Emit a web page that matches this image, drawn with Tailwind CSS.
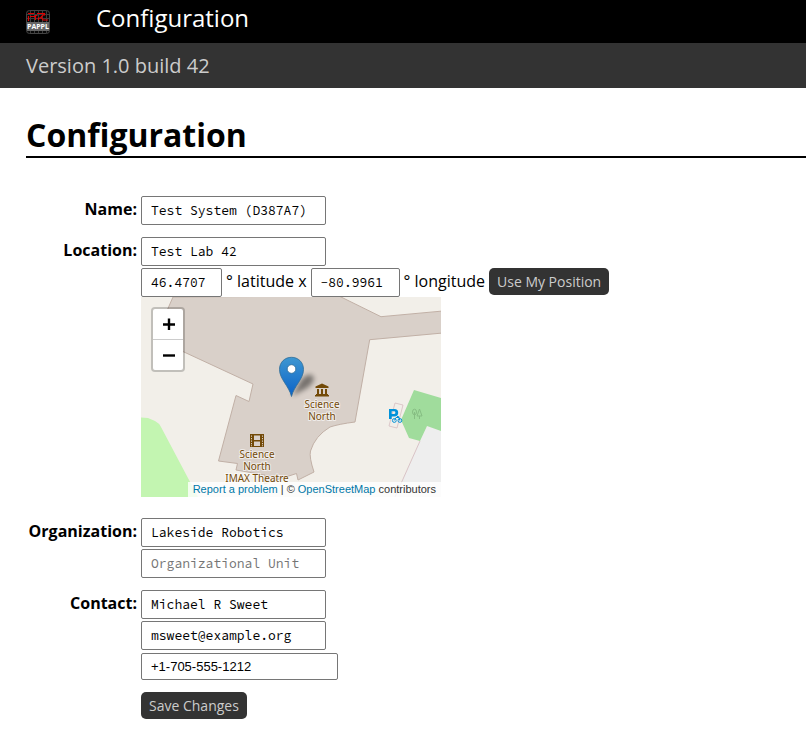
<!DOCTYPE html>
<html lang="en">
<head>
<meta charset="utf-8">
<meta name="viewport" content="width=device-width, initial-scale=1">
<title>Configuration</title>
<script src="https://cdn.jsdelivr.net/npm/@tailwindcss/browser@4"></script>
</head>
<body class="bg-white text-black text-base font-['Open_Sans',sans-serif]">
<header>
  <div class="bg-black text-white h-[43px] pl-[26px] pb-2 flex items-center gap-[46px]">
    <a href="#" aria-label="PAPPL" class="mt-2">
      <svg class="w-6 h-6 block" viewBox="0 0 24 24">
        <rect x=".5" y=".5" width="23" height="23" rx="3" fill="#080808" stroke="#444"/>
        <path d="M4.500 1v11M8.500 1v11M12.500 1v11M16.500 1v11M20.500 1v11M1 4.500h22M1 8.500h22M4.500 21v2M8.500 21v2M12.500 21v2M16.500 21v2M20.500 21v2" stroke="#3c3c3c" fill="none"/>
        <path d="M2.500 11V6M2 3.500H8M4 6.500h5M9.500 10V5.500h2M11 3.500h7.500v2M12.500 10V8h2l3-3.500M15 6.500l2 3.500h5" stroke="#e00000" stroke-width="1.200" fill="none"/>
        <rect x="1" y="12" width="22" height="9" fill="#666"/>
        <text x="12" y="19" text-anchor="middle" font-family="Open Sans" font-weight="700" font-size="7" fill="#fff">PAPPL</text>
      </svg>
    </a>
    <a href="#" class="text-2xl">Configuration</a>
  </div>
  <div class="bg-[#333] text-[#ccc] h-[45px] pl-[26px] flex items-center text-xl">Version 1.0 build 42</div>
</header>
<main class="pl-[26px] pt-[26px]">
  <h1 class="text-[32px] leading-[42px] font-bold border-b-2 border-black">Configuration</h1>
  <form class="mt-[38px] grid grid-cols-[111px_1fr] gap-x-1 gap-y-3">
    <label for="name" class="text-right font-bold leading-[26px]">Name:</label>
    <div class="flex"><input id="name" type="text" value="Test System (D387A7)" class="w-[185px] h-[29px] px-[9px] border border-[#767676] rounded-xs text-[13px] leading-5 font-['Source_Code_Pro','Noto_Sans_Mono','Liberation_Mono',monospace]"></div>

    <label for="location" class="text-right font-bold leading-[26px]">Location:</label>
    <div class="flex flex-col items-start gap-[2px] mb-[9px]">
      <input id="location" type="text" value="Test Lab 42" class="w-[185px] h-[29px] px-[9px] border border-[#767676] rounded-xs text-[13px] leading-5 font-['Source_Code_Pro','Noto_Sans_Mono','Liberation_Mono',monospace]">
      <div>
        <div class="flex items-start gap-1 leading-[26px]">
          <input id="lat" type="text" inputmode="decimal" value="46.4707" class="w-[81px] h-[29px] px-[9px] border border-[#767676] rounded-xs text-[13px] leading-5 font-['Source_Code_Pro','Noto_Sans_Mono','Liberation_Mono',monospace]">
          <label for="lat">° latitude x</label>
          <input id="lon" type="text" inputmode="decimal" value="−80.9961" class="w-[89px] h-[29px] px-[9px] border border-[#767676] rounded-xs text-[13px] leading-5 font-['Source_Code_Pro','Noto_Sans_Mono','Liberation_Mono',monospace]">
          <label for="lon">° longitude</label>
          <button type="button" class="bg-[#333] text-[#ccc] text-sm h-[27px] px-2 rounded-[5px]">Use My Position</button>
        </div>
        <div class="relative w-[300px] h-[200px] overflow-hidden bg-[#f2efe9]">
          <svg class="block w-full h-full" viewBox="0 0 300 200" role="img" aria-label="Map">
            <defs>
              <linearGradient id="pin" x1="0" y1="0" x2="0" y2="1"><stop offset="0" stop-color="#3e97d1"/><stop offset="1" stop-color="#0b62c8"/></linearGradient>
              <filter id="soft" x="-50%" y="-50%" width="200%" height="200%"><feGaussianBlur stdDeviation="2.5"/></filter>
            </defs>
            <path d="M0 120.500L7 121L14 124Q18 126 20 130L57 200H0Z" fill="#c3f5b1"/>
            <path d="M32 0L14 41L43 55L112 87L108 104.500L95 98.500L77.500 164L96.500 166.500L95 173L124 178L123 187L155.500 176.500L157 183L173 175Q168 160 169.500 154Q174 139 189 130Q198 127 214 125L228.700 42.700L302 36V14L240 19.700L198 -1Z" fill="#d9d0c9" stroke="#c1b0a6"/>
            <path d="M286 129L300 134V200H254L279 144Z" fill="#eee"/>
            <path d="M279 144L254 200" stroke="#d9c3c6" fill="none"/>
            <path d="M273 93L300 101V134L286 129L279 144L268 141L260 123Z" fill="#a0dc9c"/>
            <path d="M254 106L262 108L256 131L248 129Z" fill="#f2efe9" stroke="#d5bcc0" stroke-width=".8"/>
            <g stroke="#86bd83" fill="none"><ellipse cx="273.500" cy="115" rx="2" ry="2.800"/><path d="M273.500 115V122M278.500 112l-2.500 7h5zM278.500 119v3"/></g>
            <path fill="#0092da" fill-rule="evenodd" d="M248 112h5.500a3.700 3.700 0 0 1 0 7.400H250.700V122H248zM250.700 114.300v2.800h2.300a1.400 1.400 0 0 0 0-2.800z"/>
            <g stroke="#0092da" fill="none" stroke-width="1"><circle cx="253.300" cy="123.500" r="1.900"/><circle cx="258.900" cy="123.500" r="1.900"/><path d="M253.300 123.500l1.700-3h3M258.900 123.500l-1.300-4H256"/></g>
            <g fill="#734a08">
              <path d="M174.500 91v-1.500l6.500-3l6.500 3V91zM176 92h2v5h-2zM180 92h2v5h-2zM184 92h2v5h-2zM175 97h12v1h1v1.500h-14V98h1z"/>
              <path fill-rule="evenodd" d="M109 137h14v13h-14zM113 138.500v4.500h6v-4.500zM113 144.500v4.500h6v-4.500zM110 138.500v1.200h1v-1.200zM110 141v1.200h1V141zM110 143.500v1.200h1v-1.200zM110 146v1.200h1V146zM110 148.300v1h1v-1zM121 138.500v1.200h1v-1.200zM121 141v1.200h1V141zM121 143.500v1.200h1v-1.200zM121 146v1.200h1V146zM121 148.300v1h1v-1z"/>
            </g>
            <g font-family="Noto Sans" font-size="10" text-anchor="middle" fill="#734a08" stroke="#fff" stroke-opacity=".6" stroke-width="2" paint-order="stroke">
              <text x="181" y="111">Science</text><text x="181" y="123">North</text>
              <text x="116" y="161">Science</text><text x="116" y="173">North</text><text x="116" y="185">IMAX Theatre</text>
            </g>
            <path d="M151 99L160 83Q167 75 172 79Q175 84 166 91Z" fill="#000" opacity=".45" filter="url(#soft)"/>
            <path d="M150.500 99.500C148 89 138.500 82 138.500 72.500C138.500 65 144 60.300 150.500 60.300C157 60.300 162.500 65 162.500 72.500C162.500 82 153 89 150.500 99.500Z" fill="url(#pin)" stroke="#2e6c97" stroke-width=".8"/>
            <circle cx="150.500" cy="72" r="4.300" fill="#fff" stroke="#2e6c97" stroke-width=".8"/>
          </svg>
          <div class="absolute left-[10px] top-[10px] rounded border-2 border-black/20 bg-clip-padding bg-white">
            <button type="button" aria-label="Zoom in" class="flex items-center justify-center w-[30px] h-[31px] border-b border-[#ccc]"><svg class="w-[14px] h-3" viewBox="0 0 14 12"><path d="M2 6.500h12M8 .5v12" stroke="#000" stroke-width="2.400"/></svg></button>
            <button type="button" aria-label="Zoom out" class="flex items-center justify-center w-[30px] h-[30px]"><svg class="w-[14px] h-3" viewBox="0 0 14 12"><path d="M2 6.500h12" stroke="#000" stroke-width="2.400"/></svg></button>
          </div>
          <div class="absolute right-0 bottom-0 bg-white/80 px-[5px] text-[11px] leading-[15px] text-[#333] whitespace-nowrap font-['Liberation_Sans',sans-serif]"><a href="#" class="text-[#0078a8]">Report a problem</a> | © <a href="#" class="text-[#0078a8]">OpenStreetMap</a> contributors</div>
        </div>
      </div>
    </div>

    <label for="org" class="text-right font-bold leading-[26px]">Organization:</label>
    <div class="flex flex-col items-start gap-[2px]">
      <input id="org" type="text" value="Lakeside Robotics" class="w-[185px] h-[29px] px-[9px] border border-[#767676] rounded-xs text-[13px] leading-5 font-['Source_Code_Pro','Noto_Sans_Mono','Liberation_Mono',monospace]">
      <input type="text" aria-label="Organizational Unit" placeholder="Organizational Unit" class="w-[185px] h-[29px] px-[9px] border border-[#767676] rounded-xs text-[13px] leading-5 placeholder:text-[#757575] font-['Source_Code_Pro','Noto_Sans_Mono','Liberation_Mono',monospace]">
    </div>

    <label for="contact" class="text-right font-bold leading-[26px]">Contact:</label>
    <div class="flex flex-col items-start gap-[2px]">
      <input id="contact" type="text" value="Michael R Sweet" class="w-[185px] h-[29px] px-[9px] border border-[#767676] rounded-xs text-[13px] leading-5 font-['Source_Code_Pro','Noto_Sans_Mono','Liberation_Mono',monospace]">
      <input type="email" aria-label="Email" value="msweet@example.org" class="w-[185px] h-[29px] px-[9px] border border-[#767676] rounded-xs text-[13px] leading-5 font-['Source_Code_Pro','Noto_Sans_Mono','Liberation_Mono',monospace]">
      <input type="tel" aria-label="Telephone" value="+1-705-555-1212" class="w-[197px] h-[27px] mt-px px-[9px] border border-[#767676] rounded-xs text-[13px] font-['Liberation_Sans',sans-serif]">
    </div>
    <div class="col-start-2"><button type="submit" class="bg-[#333] text-[#ccc] text-sm h-[27px] px-2 rounded-[5px]">Save Changes</button></div>
  </form>
</main>
</body>
</html>
